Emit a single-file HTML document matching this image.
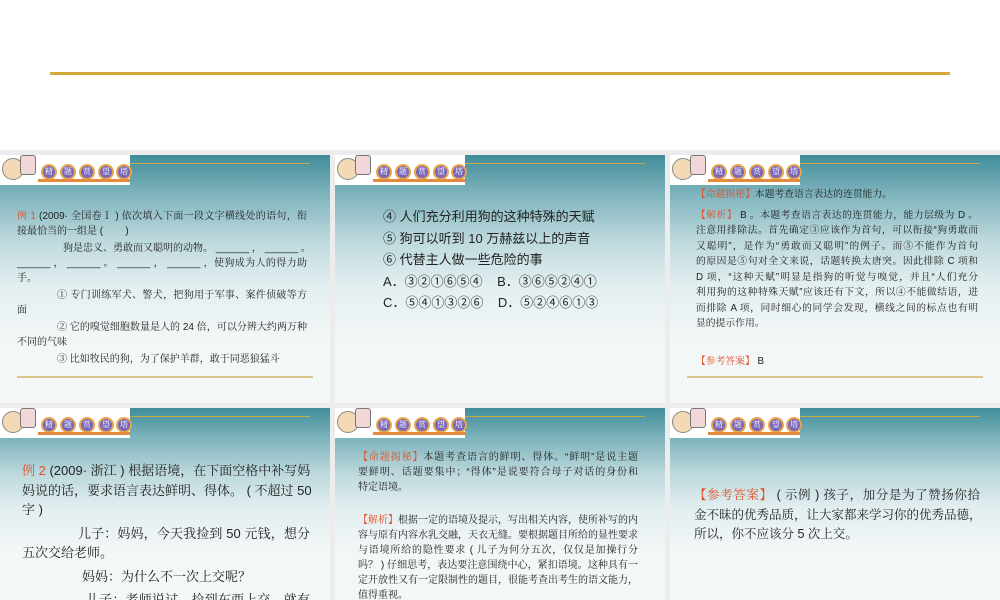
<!DOCTYPE html>
<html><head><meta charset="utf-8"><style>
*{margin:0;padding:0;box-sizing:border-box}
body{width:1000px;height:600px;background:#fff;position:relative;overflow:hidden;font-family:"Liberation Sans","Noto Serif CJK SC","Noto Sans CJK SC",serif;color:#222}
.top{position:absolute;left:0;top:0;width:1000px;height:150px;background:#fff}
.gl{position:absolute;left:50px;top:72px;width:900px;height:3px;background:#d2a93a}
.gap{position:absolute;left:0;top:150px;width:1000px;height:450px;background:#ececec}
.s{position:absolute;width:330px;overflow:hidden;background:linear-gradient(180deg,#3f8d99 0%,#7fb4bd 16%,#bcd8dc 34%,#e2eef0 52%,#f3f7f7 75%)}
.hd{position:absolute;left:0;top:0;width:130px;height:30px;background:#fff}
.hd .face{position:absolute;left:2px;top:3px;width:22px;height:22px;border-radius:50%;background:#f3d9b4;border:1px solid #888}
.hd .tv{position:absolute;left:20px;top:0;width:16px;height:20px;background:#f1d7d7;border:1px solid #777;border-radius:3px}
.hd .c{position:absolute;top:9px;width:16px;height:16px;border-radius:50%;background:#7a66b8;border:2px solid #e7a64b;color:#fff;font-size:8px;text-align:center;line-height:12px}
.hd .bar{position:absolute;left:38px;top:24px;width:92px;height:3px;background:#e48a3a}
.tl{position:absolute;left:130px;top:8px;width:180px;height:1px;background:#c7a947}
.bl{position:absolute;left:17px;width:296px;height:2px;background:#dcc58a}
.t{position:absolute}
.t div{white-space:nowrap}
.t .j{text-align:justify;text-align-last:justify}
.r{color:#e0502a}
</style></head><body>
<div class="top"><div class="gl"></div></div>
<div class="gap"></div>

<div class="s" style="left:0;top:155px;height:248px">
 <div class="hd"><div class="face"></div><div class="tv"></div>
 <div class="c" style="left:41px">精</div><div class="c" style="left:60px">题</div><div class="c" style="left:79px">赏</div><div class="c" style="left:98px">望</div><div class="c" style="left:116px">塔</div><div class="bar"></div></div>
 <div class="tl"></div>
 <div class="t" style="top:54px;left:17px;width:290px;font-size:10px;line-height:15px">
 <div class="j"><span class="r">例 1</span> (2009· 全国卷Ⅰ ) 依次填入下面一段文字横线处的语句，衔</div>
 <div>接最恰当的一组是 (&nbsp;&nbsp;&nbsp;&nbsp;&nbsp;&nbsp;&nbsp;&nbsp;)</div>
 <div class="j" style="padding-left:46px;margin-top:2px">狗是忠义、勇敢而又聪明的动物。 ______ ， ______ 。</div>
 <div class="j">______ ， ______ 。 ______ ， ______ ，使狗成为人的得力助</div>
 <div>手。</div>
 <div class="j" style="padding-left:40px;margin-top:2px">① 专门训练军犬、警犬，把狗用于军事、案件侦破等方</div>
 <div>面</div>
 <div class="j" style="padding-left:40px;margin-top:2px">② 它的嗅觉细胞数量是人的 24 倍，可以分辨大约两万种</div>
 <div>不同的气味</div>
 <div style="padding-left:40px;margin-top:2px">③ 比如牧民的狗，为了保护羊群，敢于同恶狼猛斗</div>
 </div>
 <div class="bl" style="top:221px"></div>
</div>

<div class="s" style="left:335px;top:155px;height:248px">
 <div class="hd"><div class="face"></div><div class="tv"></div>
 <div class="c" style="left:41px">精</div><div class="c" style="left:60px">题</div><div class="c" style="left:79px">赏</div><div class="c" style="left:98px">望</div><div class="c" style="left:116px">塔</div><div class="bar"></div></div>
 <div class="tl"></div>
 <div class="t" style="top:51px;left:48px;font-size:13px;line-height:21.5px;font-family:'Liberation Sans','Noto Sans CJK SC',sans-serif">
 <div>④ 人们充分利用狗的这种特殊的天赋</div>
 <div>⑤ 狗可以听到 10 万赫兹以上的声音</div>
 <div>⑥ 代替主人做一些危险的事</div>
 <div>A．③②①⑥⑤④&nbsp;&nbsp;&nbsp;&nbsp;B．③⑥⑤②④①</div>
 <div>C．⑤④①③②⑥&nbsp;&nbsp;&nbsp;&nbsp;D．⑤②④⑥①③</div>
 </div>
</div>

<div class="s" style="left:670px;top:155px;height:248px">
 <div class="hd"><div class="face"></div><div class="tv"></div>
 <div class="c" style="left:41px">精</div><div class="c" style="left:60px">题</div><div class="c" style="left:79px">赏</div><div class="c" style="left:98px">望</div><div class="c" style="left:116px">塔</div><div class="bar"></div></div>
 <div class="tl"></div>
 <div class="t" style="top:32px;left:26px;width:282px;font-size:9.8px;line-height:15.5px">
 <div><span class="r">【命题揭秘】</span>本题考查语言表达的连贯能力。</div>
 <div class="j" style="margin-top:5px"><span class="r">【解析】</span> B 。本题考查语言表达的连贯能力，能力层级为 D 。</div>
 <div class="j">注意用排除法。首先确定③应该作为首句，可以衔接“狗勇敢而</div>
 <div class="j">又聪明”，是作为“勇敢而又聪明”的例子。而⑤不能作为首句</div>
 <div class="j">的原因是⑤句对全文来说，话题转换太唐突。因此排除 C 项和</div>
 <div class="j">D 项，“这种天赋”明显是指狗的听觉与嗅觉，并且“人们充分</div>
 <div class="j">利用狗的这种特殊天赋”应该还有下文，所以④不能做结语，进</div>
 <div class="j">而排除 A 项，同时细心的同学会发现，横线之间的标点也有明</div>
 <div>显的提示作用。</div>
 <div style="margin-top:22px"><span class="r">【参考答案】</span> B</div>
 </div>
 <div class="bl" style="top:221px"></div>
</div>

<div class="s" style="left:0;top:408px;height:192px">
 <div class="hd"><div class="face"></div><div class="tv"></div>
 <div class="c" style="left:41px">精</div><div class="c" style="left:60px">题</div><div class="c" style="left:79px">赏</div><div class="c" style="left:98px">望</div><div class="c" style="left:116px">塔</div><div class="bar"></div></div>
 <div class="tl"></div>
 <div class="t" style="top:53px;left:22px;width:288px;font-size:13px;line-height:19.5px">
 <div class="j"><span class="r">例 2</span> (2009· 浙江 ) 根据语境，在下面空格中补写妈</div>
 <div class="j">妈说的话，要求语言表达鲜明、得体。 ( 不超过 50</div>
 <div>字 )</div>
 <div class="j" style="padding-left:56px;margin-top:4px">儿子：妈妈，今天我捡到 50 元钱，想分</div>
 <div>五次交给老师。</div>
 <div style="padding-left:60px;margin-top:4px">妈妈：为什么不一次上交呢？</div>
 <div class="j" style="padding-left:64px;margin-top:4px">儿子：老师说过，捡到东西上交，就有</div>
 </div>
</div>

<div class="s" style="left:335px;top:408px;height:192px">
 <div class="hd"><div class="face"></div><div class="tv"></div>
 <div class="c" style="left:41px">精</div><div class="c" style="left:60px">题</div><div class="c" style="left:79px">赏</div><div class="c" style="left:98px">望</div><div class="c" style="left:116px">塔</div><div class="bar"></div></div>
 <div class="tl"></div>
 <div class="t" style="top:42px;left:23px;width:280px;font-size:10px;line-height:15px">
 <div class="j"><span class="r">【命题揭秘】</span>本题考查语言的鲜明、得体。“鲜明”是说主题</div>
 <div class="j">要鲜明、话题要集中；“得体”是说要符合母子对话的身份和</div>
 <div>特定语境。</div>
 <div class="j" style="margin-top:18px"><span class="r">【解析】</span>根据一定的语境及提示，写出相关内容，使所补写的内</div>
 <div class="j">容与原有内容水乳交融，天衣无缝。要根据题目所给的显性要求</div>
 <div class="j">与语境所给的隐性要求 ( 儿子为何分五次，仅仅是加操行分</div>
 <div class="j">吗？ ) 仔细思考，表达要注意围绕中心，紧扣语境。这种具有一</div>
 <div class="j">定开放性又有一定限制性的题目，很能考查出考生的语文能力，</div>
 <div>值得重视。</div>
 </div>
</div>

<div class="s" style="left:670px;top:408px;height:192px">
 <div class="hd"><div class="face"></div><div class="tv"></div>
 <div class="c" style="left:41px">精</div><div class="c" style="left:60px">题</div><div class="c" style="left:79px">赏</div><div class="c" style="left:98px">望</div><div class="c" style="left:116px">塔</div><div class="bar"></div></div>
 <div class="tl"></div>
 <div class="t" style="top:78px;left:24px;width:286px;font-size:12.5px;line-height:19.5px">
 <div class="j"><span class="r">【参考答案】</span> ( 示例 ) 孩子，加分是为了赞扬你拾</div>
 <div class="j">金不昧的优秀品质，让大家都来学习你的优秀品德，</div>
 <div>所以，你不应该分 5 次上交。</div>
 </div>
</div>
</body></html>
